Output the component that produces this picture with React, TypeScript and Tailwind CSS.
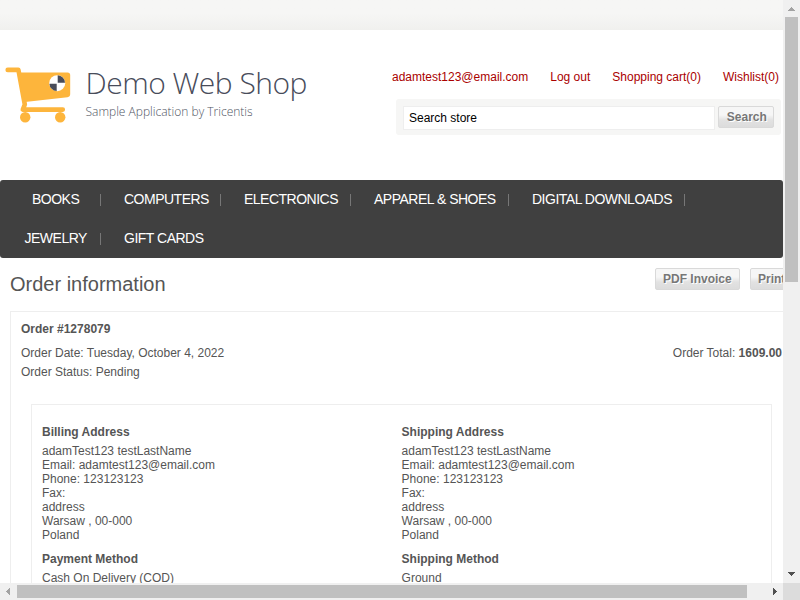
import React from "react";

const navTop = [
  { label: "BOOKS", box: "w-[101px]", item: "pl-8" },
  { label: "COMPUTERS", box: "w-[120px]", item: "pl-[23px]" },
  { label: "ELECTRONICS", box: "w-[130px]", item: "pl-[23px]" },
  { label: "APPAREL & SHOES", box: "w-[158px]", item: "pl-[23px]" },
  { label: "DIGITAL DOWNLOADS", box: "w-[176px]", item: "pl-[23px]" },
];

function NavItem({ label, box, item }: { label: string; box: string; item: string }) {
  return (
    <li className={`flex h-[39px] shrink-0 items-center justify-between whitespace-nowrap ${box} ${item}`}>
      <span className="mb-[2px]">{label}</span>
      <span className="mt-px h-3 w-px bg-[#777]" />
    </li>
  );
}

function GrayButton({ children, size }: { children: string; size: string }) {
  return (
    <button
      className={`h-[22px] shrink-0 whitespace-nowrap rounded-[2px] border border-[#d9d9d9] bg-linear-to-b from-[#f6f6f6] from-40% via-[#e2e2e2] via-65% to-[#dcdcdc] text-left text-[12px] leading-[20px] font-bold text-[#777] [text-shadow:1px_1px_0_#fff] ${size}`}
    >
      {children}
    </button>
  );
}

function Address({ title, method, value }: { title: string; method: string; value: string }) {
  return (
    <div className="w-[359.6px] shrink-0 whitespace-nowrap">
      <div className="mb-[5px] font-bold">{title}</div>
      <div>adamTest123 testLastName</div>
      <div>Email: adamtest123@email.com</div>
      <div>Phone: 123123123</div>
      <div>Fax:</div>
      <div>address</div>
      <div>Warsaw , 00-000</div>
      <div>Poland</div>
      <div className="mt-[10px] mb-[5px] font-bold">{method}</div>
      <div>{value}</div>
    </div>
  );
}

function Logo() {
  return (
    <div className="flex h-[70px] w-[320px] shrink-0">
      <svg width="80" height="70" viewBox="0 60 80 70" className="shrink-0">
        <path d="M7.7 69.9H18.4L24.8 104.5L22.8 109.6H62.8" fill="none" stroke="#fdb53c" strokeWidth="4.6" strokeLinecap="round" strokeLinejoin="round" />
        <path d="M18 72.4H67.5Q70.2 72.4 70.2 75V94Q70.2 96.8 67.5 97.2L25 102Z" fill="#fdb53c" />
        <circle cx="25.2" cy="117.2" r="5.2" fill="#fdb53c" />
        <circle cx="60.2" cy="117.2" r="5.2" fill="#fdb53c" />
        <circle cx="57.2" cy="83.2" r="8" fill="#fff" />
        <path d="M57.7 82.7V75.3A7.8 7.8 0 0 1 65 82.7ZM56.7 83.7V91.1A7.8 7.8 0 0 1 49.4 83.7Z" fill="#484c5a" />
      </svg>
      <div className="whitespace-nowrap pl-[5.5px] font-['Open_Sans',sans-serif] font-light text-[#484c5a]">
        <div className="pt-[3px] text-[30px] leading-[40px] tracking-[-0.5px]">Demo Web Shop</div>
        <div className="pt-px text-[12px] leading-[16px] text-[#50545f]">Sample Application by Tricentis</div>
      </div>
    </div>
  );
}

export default function App() {
  return (
    <div className="flex h-[600px] w-[800px] flex-col overflow-hidden bg-white font-['Liberation_Sans',Arial,sans-serif] text-[12px] leading-[14px] text-[#555]">
      <div className="flex h-[583px]">
        <main className="h-[583px] w-[783px] overflow-hidden">
          <div className="h-[30px] bg-linear-to-b from-[#f6f6f5] from-45% to-[#f0f0ee]" />
          <header className="flex h-[150px] pt-[30px]">
            <Logo />
            <div className="flex w-[463px] flex-col">
              <nav className="mt-[10px] flex h-[14px] justify-end gap-[22px] pr-[4px] whitespace-nowrap text-[#a00]">
                <a>adamtest123@email.com</a>
                <a>Log out</a>
                <a>Shopping cart(0)</a>
                <a>Wishlist(0)</a>
              </nav>
              <div className="mt-[15px] ml-[76px] flex h-9 w-[385px] gap-[3px] rounded-[3px] bg-[#f6f6f5] pt-[7px] pl-[7px]">
                <div className="h-6 w-[312px] border border-[#eee] bg-white pl-[5px] leading-[22px] text-black">Search store</div>
                <GrayButton size="w-14 pl-[7.8px]">Search</GrayButton>
              </div>
            </div>
          </header>
          <nav className="h-[78px] rounded-[3px] bg-[#404040] text-[14px] tracking-[-0.5px] text-white">
            <ul className="flex">
              {navTop.map((n) => (
                <NavItem key={n.label} {...n} />
              ))}
            </ul>
            <ul className="flex">
              <NavItem label="JEWELRY" box="w-[101px]" item="pl-[24.5px]" />
              <li className="flex h-[39px] items-center pb-[2px] pl-[23px]">GIFT CARDS</li>
            </ul>
          </nav>
          <div className="flex h-[53px] w-[840px] pt-[10px] pl-[10px]">
            <h1 className="mt-1 w-[645px] text-[20px] leading-6">Order information</h1>
            <div className="flex gap-[10px]">
              <GrayButton size="w-[85px] pl-[7px]">PDF Invoice</GrayButton>
              <GrayButton size="w-[50px] pl-[7px]">Print</GrayButton>
            </div>
          </div>
          <section className="ml-[10px] h-[600px] w-[783px] border border-[#eee] px-[10px] pt-[10px]">
            <div className="font-bold">Order #1278079</div>
            <div className="mt-[10px] flex w-[761px] justify-between">
              <span>Order Date: Tuesday, October 4, 2022</span>
              <span>
                Order Total: <b>1609.00</b>
              </span>
            </div>
            <div className="mt-[5px]">Order Status: Pending</div>
            <div className="mt-[25px] ml-[10px] flex h-[500px] w-[741px] border border-[#eee] pt-5 pl-[10px]">
              <Address title="Billing Address" method="Payment Method" value="Cash On Delivery (COD)" />
              <Address title="Shipping Address" method="Shipping Method" value="Ground" />
            </div>
          </section>
        </main>
        <div className="flex w-[17px] flex-col bg-[#f0f0f0] pl-[2px]">
          <svg width="13" height="17" shapeRendering="crispEdges">
            <path d="M3 11H10L6.5 7Z" fill="#a3a3a3" />
          </svg>
          <div className="h-[265px] w-[13px] bg-[#c0c0c0]" />
          <svg width="13" height="17" className="mt-auto" shapeRendering="crispEdges">
            <path d="M3 6H10L6.5 10Z" fill="#505050" />
          </svg>
        </div>
      </div>
      <div className="flex h-[17px] bg-[#f0f0f0]">
        <svg width="17" height="17" shapeRendering="crispEdges">
          <path d="M10 5V12L6 8.5Z" fill="#a3a3a3" />
        </svg>
        <div className="mt-[2px] h-[13px] w-[730px] bg-[#c0c0c0]" />
        <svg width="36" height="17" shapeRendering="crispEdges">
          <path d="M26 5V12L30 8.5Z" fill="#505050" />
        </svg>
        <div className="w-[17px] bg-[#dcdcdc]" />
      </div>
    </div>
  );
}
